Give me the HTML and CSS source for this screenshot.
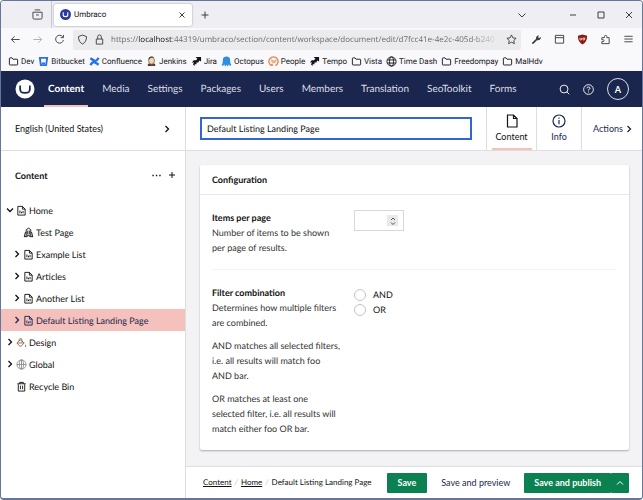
FILE: index.html
```html
<!DOCTYPE html>
<html lang="en">
<head>
    <meta charset="UTF-8">
    <meta name="viewport" content="width=device-width, initial-scale=1.0">
    <title>Umbraco</title>
    <link rel="stylesheet" href="styles.css">
</head>
<body>

    <!-- Shared icons -->
    <svg class="sprite" aria-hidden="true">
        <symbol id="i-right" viewBox="0 0 8 8"><path d="M2.5 1l3 3-3 3"/></symbol>
        <symbol id="i-down" viewBox="0 0 8 8"><path d="M1 2.5l3 3 3-3"/></symbol>
        <symbol id="i-up" viewBox="0 0 8 8"><path d="M1 5.5l3-3 3 3"/></symbol>
        <symbol id="i-folder" viewBox="0 0 12 12"><path d="M1.5 9V2.8q0-.8.8-.8h2l1.2 1.5h4.2q.8 0 .8.8V9q0 .8-.8.8H2.3q-.8 0-.8-.8z"/></symbol>
        <symbol id="i-doc" viewBox="0 0 12 12"><path d="M2 1.500h5L10 4.500V11H2zM7 1.500v3h3"/><path d="M4.300 6v3M6 7.300V9M7.700 6.500V9"/></symbol>
        <symbol id="i-jira" viewBox="0 0 12 12"><path class="solid" d="M5 1h6v5L9 5 8 7H6v2H4v2L2 9l1.500-2L1 7l2-2.500h2.500L7 3z"/></symbol>
        <symbol id="i-globe" viewBox="0 0 12 12"><circle cx="6" cy="6" r="5"/><ellipse cx="6" cy="6" rx="2.2" ry="5"/><path d="M1.400 4.300h9.200M1.400 7.700h9.200"/></symbol>
    </svg>

    <div class="window">

        <div class="tabs">
            <button class="tabs-view" aria-label="View tabs"><svg class="icon" viewBox="0 0 12 12"><path d="M3 1h6M1 3.500h10v6q0 1.500-1.500 1.500h-7Q1 11 1 9.500zM4.500 6.500h3"/></svg></button>
            <div class="tab">
                <svg class="icon" viewBox="0 0 12 12"><circle cx="6" cy="6" r="6" fill="#2a3a9e" stroke="none"/><path d="M3.500 3.500v3Q3.500 8.300 6 8.300t2.500-1.800v-3" stroke="#fff" stroke-width="1.200"/></svg>
                <span class="tab-title">Umbraco</span>
                <button aria-label="Close tab"><svg class="icon-s" viewBox="0 0 8 8"><path d="M1.500 1.500l5 5M6.500 1.500l-5 5"/></svg></button>
            </div>
            <button aria-label="New tab"><svg class="icon-s" viewBox="0 0 8 8"><path d="M4 .500v7M.500 4h7"/></svg></button>
            <div class="window-buttons">
                <button aria-label="List tabs"><svg class="icon-s" viewBox="0 0 8 8"><path d="M.500 2.500L4 6l3.500-3.500"/></svg></button>
                <button aria-label="Minimize"><svg class="icon-s" viewBox="0 0 8 8"><path d="M1 4h6"/></svg></button>
                <button aria-label="Maximize"><svg class="icon-s" viewBox="0 0 8 8"><path d="M1 1h6v6H1z"/></svg></button>
                <button aria-label="Close"><svg class="icon-s" viewBox="0 0 8 8"><path d="M1 1l6 6M7 1L1 7"/></svg></button>
            </div>
        </div>

        <div class="toolbar">
            <div class="toolbar-nav">
                <button aria-label="Back"><svg class="icon" viewBox="0 0 12 12"><path d="M10.500 6h-9M5 2.500L1.500 6 5 9.500"/></svg></button>
                <button class="disabled" aria-label="Forward"><svg class="icon" viewBox="0 0 12 12"><path d="M1.500 6h9M7 2.500L10.500 6 7 9.500"/></svg></button>
                <button aria-label="Reload"><svg class="icon" viewBox="0 0 12 12"><path d="M9.600 3.200A4.300 4.300 0 1 0 10.300 6.500M10.300 1v3H7.300"/></svg></button>
            </div>
            <div class="address">
                <svg class="icon" viewBox="0 0 12 12"><path d="M6 1.200l4.300 1.500q.300 5.800-4.300 8.300-4.600-2.500-4.300-8.300z"/></svg>
                <svg class="icon" viewBox="0 0 12 12"><path d="M2.500 5.500h7V11h-7zM4 5.500V3q0-2 2-2t2 2v2.500"/></svg>
                <span class="url">https://<b>localhost</b>:44319/umbraco/section/content/workspace/document/edit/d7fcc41e-4e2c-405d-b240</span>
                <button aria-label="Bookmark"><svg class="icon" viewBox="0 0 12 12"><path d="M6 1l1.500 3.200 3.500.500-2.500 2.400.600 3.500L6 8.900 2.900 10.600l.600-3.500L1 4.700l3.500-.500z"/></svg></button>
            </div>
            <div class="toolbar-tools">
                <button aria-label="Developer tools"><svg class="icon" viewBox="0 0 12 12"><path d="M1.500 10.500L6.500 5.500" stroke-width="1.800"/><path class="solid" d="M5.500 5.500Q5 2 8.500 1.300L7.800 3.700l1 .700 2-1Q11 7 7 6.800z"/></svg></button>
                <button aria-label="Reader"><svg class="icon" viewBox="0 0 12 12"><path d="M1.500 1.500h9v8.500h-9zM1.500 4h9"/></svg></button>
                <button aria-label="Blocker"><svg class="icon" viewBox="0 0 12 12"><path d="M6 .500l5 1.500q.300 6.500-5 9.500Q.700 8.500 1 2z" fill="#8d1a12" stroke="none"/><path d="M3.200 4.200v1.500q0 .900 1 .900t1-.900V4.200M7.500 4.300a1.100 1.100 0 1 0 .100 0" stroke="#fff" stroke-width=".9"/></svg></button>
                <button aria-label="Extensions"><svg class="icon" viewBox="0 0 12 12"><path d="M2 4h2.800V2.800q0-1.300 1.300-1.300t1.300 1.300V4H10v6.500H2V8.300h1.200Q4.300 8.300 4.300 7.200T3.200 6.200H2z"/></svg></button>
                <button aria-label="Menu"><svg class="icon" viewBox="0 0 12 12"><path d="M1.500 2.500h9M1.500 5.500h9M1.500 8.500h9"/></svg></button>
            </div>
        </div>

        <nav class="bookmarks">
            <a href="#"><svg class="icon"><use href="#i-folder"/></svg>Dev</a>
            <a href="#"><svg class="icon" viewBox="0 0 12 12"><path d="M2 2h8L8.900 10H3.100z" fill="none" stroke="#2672e8" stroke-width="2"/><path d="M4.200 8h3.600" stroke="#2672e8" stroke-width="2"/></svg>Bitbucket</a>
            <a href="#"><svg class="icon" viewBox="0 0 12 12"><path d="M1.500 10Q4 5.800 6 6.800t4.500 2.700M10.500 2Q8 6.200 6 5.200T1.500 2.500" stroke="#2672e8" stroke-width="2.600"/></svg>Confluence</a>
            <a href="#"><svg class="icon" viewBox="0 0 12 12"><path d="M2 11V8.500h8V11z" fill="#4a4038" stroke="none"/><ellipse cx="6" cy="5" rx="3.200" ry="4" fill="#f0d6b7" stroke="#6b5140" stroke-width=".8"/><path d="M3 3.500Q4 .500 8 1.500" stroke="#57473c" stroke-width="1.200"/><path d="M5.500 9l2 1.500" stroke="#c8342c"/></svg>Jenkins</a>
            <a href="#"><svg class="icon"><use href="#i-jira"/></svg>Jira</a>
            <a href="#"><svg class="icon" viewBox="0 0 12 12"><path d="M6 .500q4 0 4 4 0 2.500.500 4l1 1.500-2 .500L8.500 9 7.500 11.500 6 9.500 4.500 11.500 3.500 9l-1 1.500-2-.500 1-1.500q.500-1.500.500-4 0-4 4-4z" fill="#2e8fe0" stroke="none"/></svg>Octopus</a>
            <a href="#"><svg class="icon" viewBox="0 0 12 12"><path d="M4 10.600A5 5 0 1 1 8 10.600M4.500 11V8.500" stroke="#e8894a" stroke-width="1.500"/><path d="M3.500 3l2 1.500h2L9 3v3.500Q8 8 6 8T3.500 6z" fill="#f2b184" stroke="none"/></svg>People</a>
            <a href="#"><svg class="icon"><use href="#i-jira"/></svg>Tempo</a>
            <a href="#"><svg class="icon"><use href="#i-folder"/></svg>Vista</a>
            <a href="#"><svg class="icon"><use href="#i-globe"/></svg>Time Dash</a>
            <a href="#"><svg class="icon"><use href="#i-folder"/></svg>Freedompay</a>
            <a href="#"><svg class="icon"><use href="#i-folder"/></svg>MalHdv</a>
        </nav>

        <div class="app">
            <header class="app-header">
                <svg class="logo" viewBox="0 0 20 20"><circle cx="10" cy="10" r="9.500" fill="#fff" stroke="none"/><path d="M5.200 6.500Q4.500 13.500 7.500 13.700 10 14 12.500 13.700 15.500 13.500 14.800 6.500" stroke="#1b264f" stroke-width="1.700"/></svg>
                <nav class="sections">
                    <a class="active" href="#">Content</a>
                    <a href="#">Media</a>
                    <a href="#">Settings</a>
                    <a href="#">Packages</a>
                    <a href="#">Users</a>
                    <a href="#">Members</a>
                    <a href="#">Translation</a>
                    <a href="#">SeoToolkit</a>
                    <a href="#">Forms</a>
                </nav>
                <div class="header-tools">
                    <button aria-label="Search"><svg class="icon" viewBox="0 0 12 12"><circle cx="5.500" cy="5.500" r="4.300"/><path d="M8.700 8.700l2.500 2.500"/></svg></button>
                    <button aria-label="Help"><svg class="icon" viewBox="0 0 12 12"><circle cx="6" cy="6" r="5.300"/><path d="M4.300 4.700Q4.400 3.200 6 3.200t1.700 1.400Q7.700 5.500 6 6.200v.9M6 8.200v1"/></svg></button>
                    <button class="avatar">A</button>
                </div>
            </header>

            <div class="workspace">
                <aside class="sidebar">
                    <button class="language">English (United States)<svg class="icon-s"><use href="#i-right"/></svg></button>
                    <div class="tree-head">
                        <h2>Content</h2>
                        <button aria-label="More"><svg class="icon" viewBox="0 0 12 12"><path d="M1.500 6H3M5.300 6h1.500M9 6h1.500" stroke-width="1.500"/></svg></button>
                        <button aria-label="Create"><svg class="icon-s" viewBox="0 0 8 8"><path d="M4 1v6M1 4h6"/></svg></button>
                    </div>
                    <ul class="tree">
                        <li><button aria-label="Collapse"><svg class="icon-s"><use href="#i-down"/></svg></button><a href="#"><svg class="icon"><use href="#i-doc"/></svg>Home</a></li>
                        <li class="child leaf"><a href="#"><svg class="icon" viewBox="0 0 12 12"><path d="M1.500 10.500l1-4.500h1M10.500 10.500l-1-4.500h-1M3.500 10.500V3L6 1.200 8.500 3v7.500M5.200 4v4M6.900 4v4M1 10.500h3.500M7.500 10.500H11M5 10.500V9h2v1.500"/></svg>Test Page</a></li>
                        <li class="child"><button aria-label="Expand"><svg class="icon-s"><use href="#i-right"/></svg></button><a href="#"><svg class="icon"><use href="#i-doc"/></svg>Example List</a></li>
                        <li class="child"><button aria-label="Expand"><svg class="icon-s"><use href="#i-right"/></svg></button><a href="#"><svg class="icon"><use href="#i-doc"/></svg>Articles</a></li>
                        <li class="child"><button aria-label="Expand"><svg class="icon-s"><use href="#i-right"/></svg></button><a href="#"><svg class="icon"><use href="#i-doc"/></svg>Another List</a></li>
                        <li class="child selected"><button aria-label="Expand"><svg class="icon-s"><use href="#i-right"/></svg></button><a href="#"><svg class="icon"><use href="#i-doc"/></svg>Default Listing Landing Page</a></li>
                        <li><button aria-label="Expand"><svg class="icon-s"><use href="#i-right"/></svg></button><a href="#"><svg class="icon brown" viewBox="0 0 12 12"><path d="M1 6.500L4.500 3 9 6.500 5.500 10H4zM1.500 6.500h7M6.500 5V2.500Q5 .500 3.500 2.500v2M10.500 8.500v2.500"/></svg>Design</a></li>
                        <li><button aria-label="Expand"><svg class="icon-s"><use href="#i-right"/></svg></button><a href="#"><svg class="icon grey" viewBox="0 0 12 12"><circle cx="6" cy="6" r="5"/><ellipse cx="6" cy="6" rx="2.300" ry="5"/><path d="M1 6h10M6 1v10"/></svg>Global</a></li>
                        <li class="leaf"><a href="#"><svg class="icon" viewBox="0 0 12 12"><path d="M1.500 3h9M4 3V1.500h4V3M2.500 3.500V11h7V3.500M4.800 5v4M7.200 5v4"/></svg>Recycle Bin</a></li>
                    </ul>
                </aside>

                <main class="editor">
                    <div class="editor-header">
                        <input class="name" type="text" value="Default Listing Landing Page" aria-label="Name">
                        <button class="view active"><svg viewBox="0 0 16 16"><path d="M3.500 2h6l3.500 3.500V14h-9.500zM9.500 2v3.500H13"/></svg>Content</button>
                        <button class="view"><svg viewBox="0 0 16 16"><circle cx="8" cy="8" r="6"/><path d="M8 7v4.200M8 4.500v1.300"/></svg>Info</button>
                        <button class="actions">Actions<svg class="icon-s"><use href="#i-right"/></svg></button>
                    </div>

                    <div class="editor-body">
                        <section class="box">
                            <h3>Configuration</h3>
                            <div class="property">
                                <div class="property-info">
                                    <label for="items">Items per page</label>
                                    <p>Number of items to be shown per page of results.</p>
                                </div>
                                <div class="number">
                                    <input id="items" type="number">
                                    <span class="spinner"><svg viewBox="0 0 10 10"><path d="M3 4l2-2 2 2M3 6.500l2 2 2-2"/></svg></span>
                                </div>
                            </div>
                            <div class="property">
                                <div class="property-info">
                                    <strong id="filter-label">Filter combination</strong>
                                    <p>Determines how multiple filters are combined.</p>
                                    <p>AND matches all selected filters, i.e. all results will match foo AND bar.</p>
                                    <p>OR matches at least one selected filter, i.e. all results will match either foo OR bar.</p>
                                </div>
                                <div class="radios" role="radiogroup" aria-labelledby="filter-label">
                                    <label><input type="radio" name="filter">AND</label>
                                    <label><input type="radio" name="filter">OR</label>
                                </div>
                            </div>
                        </section>
                    </div>

                    <footer class="editor-footer">
                        <nav class="breadcrumb">
                            <a href="#">Content</a><i>/</i><a href="#">Home</a><i>/</i><span>Default Listing Landing Page</span>
                        </nav>
                        <button class="primary">Save</button>
                        <button class="plain">Save and preview</button>
                        <div class="button-group">
                            <button class="primary">Save and publish</button>
                            <button class="primary more" aria-label="More publish options"><svg class="icon-s"><use href="#i-up"/></svg></button>
                        </div>
                    </footer>
                </main>
            </div>
        </div>
    </div>

</body>
</html>
```
FILE: styles.css
```css
* {
    box-sizing: border-box;
}

body {
    margin: 0;
    background-color: #fff;
    font-family: Lato, sans-serif;
    font-size: 9px;
    line-height: 15px;
    color: #111;
    text-rendering: geometricPrecision;
}

button {
    display: flex;
    align-items: center;
    justify-content: center;
    padding: 0;
    border: none;
    background: none;
    font: inherit;
    color: inherit;
    cursor: pointer;
}

a {
    color: inherit;
    text-decoration: none;
}

h2, h3, p, ul {
    margin: 0;
    padding: 0;
}

svg {
    flex: none;
    fill: none;
    stroke: currentColor;
    stroke-width: 1;
}

.sprite {
    display: none;
}

.solid {
    fill: currentColor;
    stroke: none;
}

.icon {
    width: 11px;
    height: 11px;
}

.icon-s {
    width: 8px;
    height: 8px;
}

.window {
    display: flex;
    flex-direction: column;
    min-height: 100vh;
    border: 1px solid #64769b;
    border-bottom-width: 2px;
    border-radius: 4px;
    overflow: hidden;
}

/* Browser */
.tabs, .toolbar, .bookmarks {
    display: flex;
    align-items: center;
    font-family: Roboto, sans-serif;
    font-size: 8px;
    background-color: #f9f9fb;
    color: #3c3c44;
}

.tabs {
    height: 27px;
    background-color: #efeef3;
}

.tabs-view {
    width: 51px;
    height: 27px;
    padding-left: 22px;
    border-right: 1px solid #c9c8d0;
}

.tab {
    display: flex;
    align-items: center;
    gap: 3px;
    width: 138px;
    height: 22px;
    margin: 0 9px 0 2px;
    padding: 0 6px;
    border-radius: 2px;
    background-color: #fff;
    box-shadow: 0 0 2px rgba(0, 0, 0, 0.4);
}

.tab-title {
    flex: 1;
    color: #15141a;
}

.window-buttons {
    display: flex;
    gap: 20px;
    margin-left: auto;
    padding-right: 9px;
}

.window-buttons button:first-child {
    margin-right: 23px;
}

.toolbar {
    height: 23px;
}

.toolbar-nav {
    display: flex;
    gap: 11px;
    padding: 0 8px 0 9px;
}

.disabled {
    color: #aaaab0;
}

.address {
    display: flex;
    flex: 1;
    align-items: center;
    gap: 6px;
    min-width: 0;
    height: 20px;
    padding: 0 4px;
    border-radius: 2px;
    background-color: #ebebed;
}

.url {
    flex: 1;
    min-width: 0;
    overflow: hidden;
    white-space: nowrap;
    color: #6b6b72;
    font-family: "Open Sans", sans-serif;
    mask-image: linear-gradient(to right, #000 92%, transparent);
}

.url b {
    font-weight: 400;
    color: #15141a;
}

.toolbar-tools {
    display: flex;
    gap: 12px;
    padding: 0 8px 0 10px;
}

.bookmarks {
    gap: 4px;
    height: 20px;
    padding: 0 7px;
    color: #15141a;
    white-space: nowrap;
}

.bookmarks a {
    display: flex;
    align-items: center;
    gap: 2px;
}

/* App header */
.app {
    display: flex;
    flex: 1;
    flex-direction: column;
}

.app-header {
    display: flex;
    align-items: center;
    height: 36px;
    padding: 0 13px 0 14px;
    background-color: #1b264f;
    color: #dcdee6;
}

.logo {
    width: 20px;
    height: 20px;
    margin-right: 9px;
}

.sections {
    display: flex;
    gap: 10px;
    height: 36px;
    font-size: 10px;
    line-height: 37px;
}

.sections a {
    padding: 0 4px;
}

.sections .active {
    border-bottom: 2px solid #f5c1bc;
    color: #fff;
    font-weight: 700;
}

.header-tools {
    display: flex;
    align-items: center;
    gap: 13px;
    margin-left: auto;
    color: #fff;
}

.avatar {
    width: 22px;
    height: 22px;
    border: 1px solid #dcdee6;
    border-radius: 50%;
    font-weight: 700;
}

/* Sidebar */
.workspace {
    display: flex;
    flex: 1;
}

.sidebar {
    width: 185px;
    border-right: 1px solid #dedee2;
}

.language {
    justify-content: space-between;
    width: 100%;
    height: 44px;
    padding: 0 14px;
    border-bottom: 1px solid #dedee2;
}

.language svg, .actions svg, .tree button svg {
    stroke-width: 1.3;
}

.tree-head {
    display: flex;
    align-items: center;
    gap: 6px;
    height: 48px;
    padding: 0 9px 0 14px;
}

.tree-head h2 {
    flex: 1;
    font-size: 9px;
}

.tree {
    list-style: none;
}

.tree li {
    display: flex;
    align-items: center;
    gap: 2px;
    height: 22px;
    padding-left: 5px;
}

.tree a {
    display: flex;
    flex: 1;
    align-items: center;
    gap: 2px;
}

.tree .child {
    padding-left: 12px;
}

.tree .leaf {
    padding-left: 15px;
}

.tree .child.leaf {
    padding-left: 22px;
}

.tree .selected {
    background-color: #f5c1bc;
    color: #1b264f;
}

.brown {
    color: #8a6a52;
}

.grey {
    color: #8f9095;
}

/* Editor */
.editor {
    display: flex;
    flex: 1;
    flex-direction: column;
    min-width: 0;
    background-color: #f3f3f5;
}

.editor-header {
    display: flex;
    align-items: center;
    height: 44px;
    padding-left: 14px;
    border-bottom: 1px solid #dedee2;
    background-color: #fff;
}

.name {
    flex: 1;
    min-width: 0;
    height: 23px;
    margin-right: 14px;
    padding: 0 5px;
    border: 2px solid #3465d8;
    font: inherit;
    color: inherit;
    text-rendering: inherit;
}

.view {
    flex-direction: column;
    align-self: stretch;
    width: 45px;
    border-left: 1px solid #dedee2;
    color: #1b264f;
}

.view svg {
    width: 16px;
    height: 16px;
    stroke-width: 1.2;
}

.view.active {
    width: 50px;
    color: #111;
    background: linear-gradient(#f5c1bc, #f5c1bc) center bottom / 40px 2px no-repeat;
}

.actions {
    align-self: stretch;
    gap: 2px;
    width: 61px;
    padding-left: 2px;
    border-left: 1px solid #dedee2;
    color: #1b264f;
}

.editor-body {
    flex: 1;
    padding: 14px 13px 14px 14px;
}

.box {
    border-radius: 2px;
    background-color: #fff;
    box-shadow: 0 1px 2px rgba(0, 0, 0, 0.3);
}

.box h3 {
    height: 30px;
    padding: 0 12px;
    border-bottom: 1px solid #e9e9eb;
    font-size: 9px;
    line-height: 30px;
}

.property {
    display: flex;
    gap: 13px;
    margin: 0 12px;
    padding: 15px 0 14px;
    border-bottom: 1px solid #f3f3f5;
}

.property:last-child {
    border-bottom: none;
}

.property-info {
    width: 129px;
    color: #333;
}

.property-info label,
.property-info strong {
    display: block;
    font-weight: 700;
    color: #111;
}

.property-info p + p {
    margin-top: 8px;
}

.number {
    display: flex;
    align-items: center;
    width: 50px;
    height: 21px;
    padding-right: 5px;
    border: 1px solid #d8d7d9;
}

.number input {
    flex: 1;
    min-width: 0;
    border: none;
    outline: none;
    font: inherit;
    appearance: textfield;
}

.spinner {
    display: flex;
    align-items: center;
    justify-content: center;
    width: 11px;
    height: 11px;
    background-color: #e9e9ed;
    color: #555;
}

.spinner svg {
    width: 10px;
    height: 10px;
}

.radios {
    padding-top: 2px;
}

.radios label {
    display: flex;
    align-items: center;
    gap: 7px;
    height: 15px;
}

.radios input {
    width: 12px;
    height: 12px;
    margin: 0;
    border: 1px solid #c4c4c8;
    border-radius: 50%;
    appearance: none;
}

/* Footer */
.editor-footer {
    display: flex;
    align-items: center;
    height: 32px;
    padding: 0 13px 0 17px;
    border-top: 1px solid #dedee2;
    background-color: #fff;
}

.breadcrumb {
    display: flex;
    flex: 1;
    gap: 3px;
    font-size: 8px;
    white-space: nowrap;
}

.breadcrumb a {
    text-decoration: underline;
}

.breadcrumb i {
    color: #c4c4c8;
}

.primary {
    height: 20px;
    padding: 0 11px;
    border-radius: 1px;
    background-color: #0b8152;
    color: #fff;
    font-weight: 700;
}

.plain {
    padding: 0 14px;
    color: #1b264f;
}

.button-group {
    display: flex;
}

.button-group .primary {
    padding: 0 10px;
}

.button-group .more {
    padding: 0 5px;
}
```
